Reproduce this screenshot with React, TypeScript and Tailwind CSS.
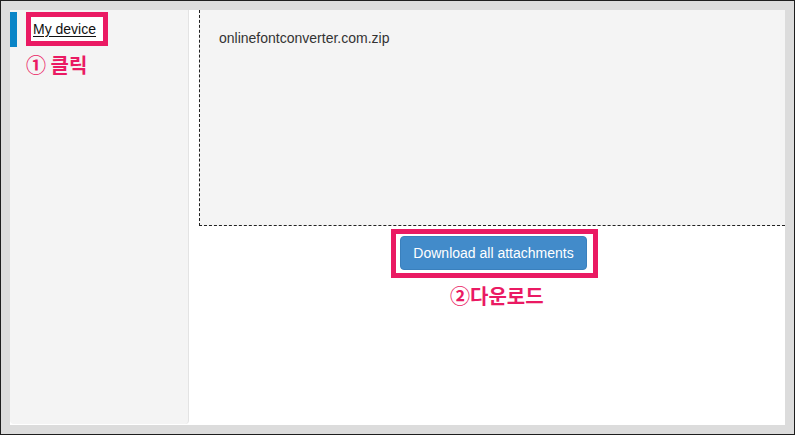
import React from "react";

export default function App() {
  return (
    <div className="w-[795px] h-[435px] border border-[#1e1e1e] bg-[#dcdcdc] p-[9px] box-border" style={{ fontFamily: '"Liberation Sans", Arial, sans-serif' }}>
      <div className="flex h-[415px] w-[775px] bg-white overflow-hidden">
        <div className="w-[179px] shrink-0 h-[414px] bg-[#f4f4f4] border-r border-[#e3e3e3] rounded-b-[4px] pt-[2px]">
          <div className="flex items-start">
            <div className="w-[7px] h-[35px] bg-[#0a85c7]" />
            <div className="ml-[9px] w-[82px] h-[34px] border-[5px] border-[#ea1a63] bg-white pl-[2px] flex items-center">
              <span className="text-[14px] leading-none underline text-[#111] underline-offset-[2px]">My device</span>
            </div>
          </div>
          <div className="ml-[16px] mt-[6px] text-[20px] leading-[24px] font-bold text-[#ea1a63]" style={{ fontFamily: '"Noto Sans CJK KR", "Noto Sans", sans-serif' }}>
            ① 클릭
          </div>
        </div>
        <div className="flex-1 pl-[10px]">
          <div className="h-[216px] bg-[#f4f4f4] border-l border-b border-dashed border-[#222] pl-[19px] pt-[16px]">
            <span className="text-[14px] leading-[20px] text-[#333]">onlinefontconverter.com.zip</span>
          </div>
          <div className="ml-[192px] mt-[3px] w-[207px] h-[49px] border-[5px] border-[#ea1a63] bg-white pl-[4px] pt-[2px]">
            <div className="w-[187px] h-[34px] bg-[#428bca] border border-[#3a80bd] rounded-[4px] flex items-center justify-center text-white text-[14px]">
              Download all attachments
            </div>
          </div>
          <div className="ml-[251px] mt-[6px] text-[20px] leading-[24px] font-bold text-[#ea1a63]" style={{ fontFamily: '"Noto Sans CJK KR", "Noto Sans", sans-serif' }}>
            ②다운로드
          </div>
        </div>
      </div>
    </div>
  );
}
